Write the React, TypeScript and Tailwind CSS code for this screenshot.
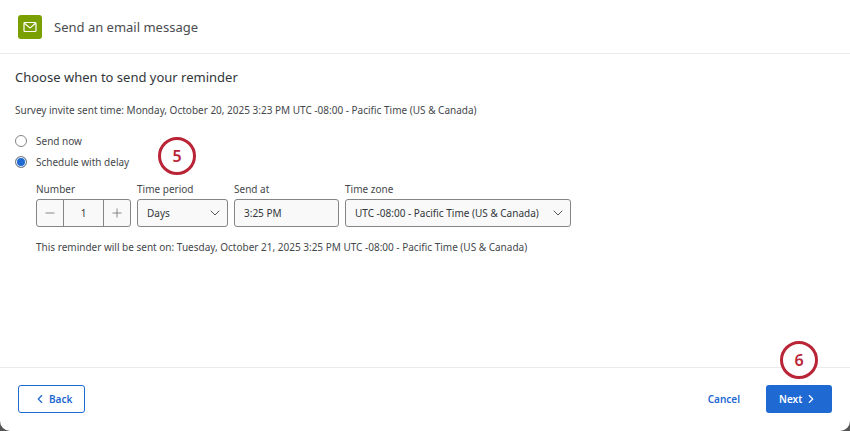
import { useState } from "react";
import type { ReactNode } from "react";
import { ChevronDown, ChevronLeft, ChevronRight, Minus, Plus } from "lucide-react";

const TIME_ZONES = ["UTC -08:00 - Pacific Time (US & Canada)", "UTC -05:00 - Eastern Time (US & Canada)"];
const PERIODS = ["Hours", "Days", "Weeks"];

function StepMarker({ step, className }: { step: number; className: string }) {
  return (
    <span
      className={`absolute grid h-[38px] w-[38px] place-items-center rounded-full border-3 border-[#b92537] bg-white text-base font-semibold text-[#b92537] ${className}`}
    >
      {step}
    </span>
  );
}

function Field({ id, label, className, children }: { id: string; label: string; className: string; children: ReactNode }) {
  return (
    <div className={className}>
      <label htmlFor={id} className="mb-0.5 block leading-4">
        {label}
      </label>
      {children}
    </div>
  );
}

function Dropdown({ id, options, initial }: { id: string; options: string[]; initial: string }) {
  return (
    <div className="relative">
      <select
        id={id}
        defaultValue={initial}
        className="h-7 w-full appearance-none rounded-[3px] border border-[#858585] bg-[#f9f9f9] pr-5 pl-[9px] text-[#32363a]"
      >
        {options.map((o) => (
          <option key={o}>{o}</option>
        ))}
      </select>
      <ChevronDown
        size={16}
        strokeWidth={1.5}
        className="pointer-events-none absolute top-[6px] right-[5px] text-[#555]"
      />
    </div>
  );
}

function EnvelopeIcon() {
  return (
    <svg width="14" height="12" viewBox="0 0 14 12" fill="none" stroke="currentColor" strokeWidth="1.2">
      <rect x="1" y="1.5" width="12" height="9" rx="1" />
      <path d="M1.5 2.2 6.2 6.4Q7 7 7.8 6.4L12.5 2.2" />
    </svg>
  );
}

export default function App() {
  const [delayed, setDelayed] = useState(true);
  const [count, setCount] = useState(1);

  return (
    <div className="min-h-screen bg-[#555]">
      <div className="flex min-h-screen flex-col rounded-b-[10px] bg-white font-['Noto_Sans',sans-serif] text-[10px] text-[#45484b]">
        <header className="flex items-center gap-3 border-b border-[#ebebeb] px-[18px] pt-[15px] pb-[14px]">
          <span className="grid h-6 w-6 place-items-center rounded-[3px] bg-[#7a9f00] text-white">
            <EnvelopeIcon />
          </span>
          <h1 className="text-[13px] leading-6 text-[#4b4d50]">Send an email message</h1>
        </header>

        <main className="flex-1 px-[15px] pt-[13px]">
          <h2 className="text-[13px] leading-5 text-[#32363a]">Choose when to send your reminder</h2>
          <p className="mt-[15px] leading-4">
            Survey invite sent time: Monday, October 20, 2025 3:23 PM UTC -08:00 - Pacific Time (US & Canada)
          </p>

          <div className="relative mt-[15px] flex flex-col items-start gap-[5px]">
            <label className="flex items-center gap-[9px] leading-4">
              <input
                type="radio"
                name="when"
                checked={!delayed}
                onChange={() => setDelayed(false)}
                className="h-3 w-3 appearance-none rounded-full border border-[#858585] bg-white checked:bg-[#1e69d2] checked:shadow-[inset_0_0_0_1px_white]"
              />
              Send now
            </label>
            <label className="flex items-center gap-[9px] leading-4">
              <input
                type="radio"
                name="when"
                checked={delayed}
                onChange={() => setDelayed(true)}
                className="h-3 w-3 appearance-none rounded-full border border-[#858585] bg-white checked:bg-[#1e69d2] checked:shadow-[inset_0_0_0_1px_white]"
              />
              Schedule with delay
            </label>
            <StepMarker step={5} className="top-1 left-[143px]" />
          </div>

          <div className="mt-[11px] ml-[21px] flex flex-wrap gap-[6px]">
            <Field id="number" label="Number" className="w-[95px]">
              <div className="flex h-7 rounded-[3px] border border-[#858585] bg-[#f9f9f9] text-[#777]">
                <button
                  type="button"
                  aria-label="Decrease"
                  onClick={() => setCount(Math.max(1, count - 1))}
                  className="grid w-[26px] place-items-center"
                >
                  <Minus size={14} strokeWidth={1.5} />
                </button>
                <input
                  id="number"
                  value={count}
                  onChange={(e) => setCount(Number(e.target.value) || 1)}
                  className="min-w-0 flex-1 border-x border-[#858585] text-center text-[#32363a] outline-none"
                />
                <button
                  type="button"
                  aria-label="Increase"
                  onClick={() => setCount(count + 1)}
                  className="grid w-[26px] place-items-center"
                >
                  <Plus size={14} strokeWidth={1.5} />
                </button>
              </div>
            </Field>
            <Field id="period" label="Time period" className="w-[91px]">
              <Dropdown id="period" options={PERIODS} initial="Days" />
            </Field>
            <Field id="send-at" label="Send at" className="w-[105px]">
              <input
                id="send-at"
                defaultValue="3:25 PM"
                className="h-7 w-full rounded-[3px] border border-[#858585] bg-[#f9f9f9] px-[9px] text-[#32363a]"
              />
            </Field>
            <Field id="zone" label="Time zone" className="w-[226px]">
              <Dropdown id="zone" options={TIME_ZONES} initial={TIME_ZONES[0]} />
            </Field>
          </div>

          <p className="mt-3 ml-[21px] leading-4">
            This reminder will be sent on: Tuesday, October 21, 2025 3:25 PM UTC -08:00 - Pacific Time (US & Canada)
          </p>
        </main>

        <footer className="flex items-center border-t border-[#ebebeb] px-[18px] pt-[17px] pb-[18px] font-semibold">
          <button
            type="button"
            className="flex h-7 w-[67px] items-center gap-0.5 rounded-[3px] border border-[#1e69d2] pl-[14px] text-[#1e69d2]"
          >
            <ChevronLeft size={14} strokeWidth={2} /> Back
          </button>
          <button type="button" className="mr-[26px] ml-auto text-[#1e69d2]">
            Cancel
          </button>
          <div className="relative">
            <button
              type="button"
              className="flex h-7 w-[66px] items-center gap-0.5 rounded-[3px] bg-[#1e69d2] pl-[13px] text-white"
            >
              Next <ChevronRight size={14} strokeWidth={2} />
            </button>
            <StepMarker step={6} className="-top-11 left-[14px]" />
          </div>
        </footer>
      </div>
    </div>
  );
}
